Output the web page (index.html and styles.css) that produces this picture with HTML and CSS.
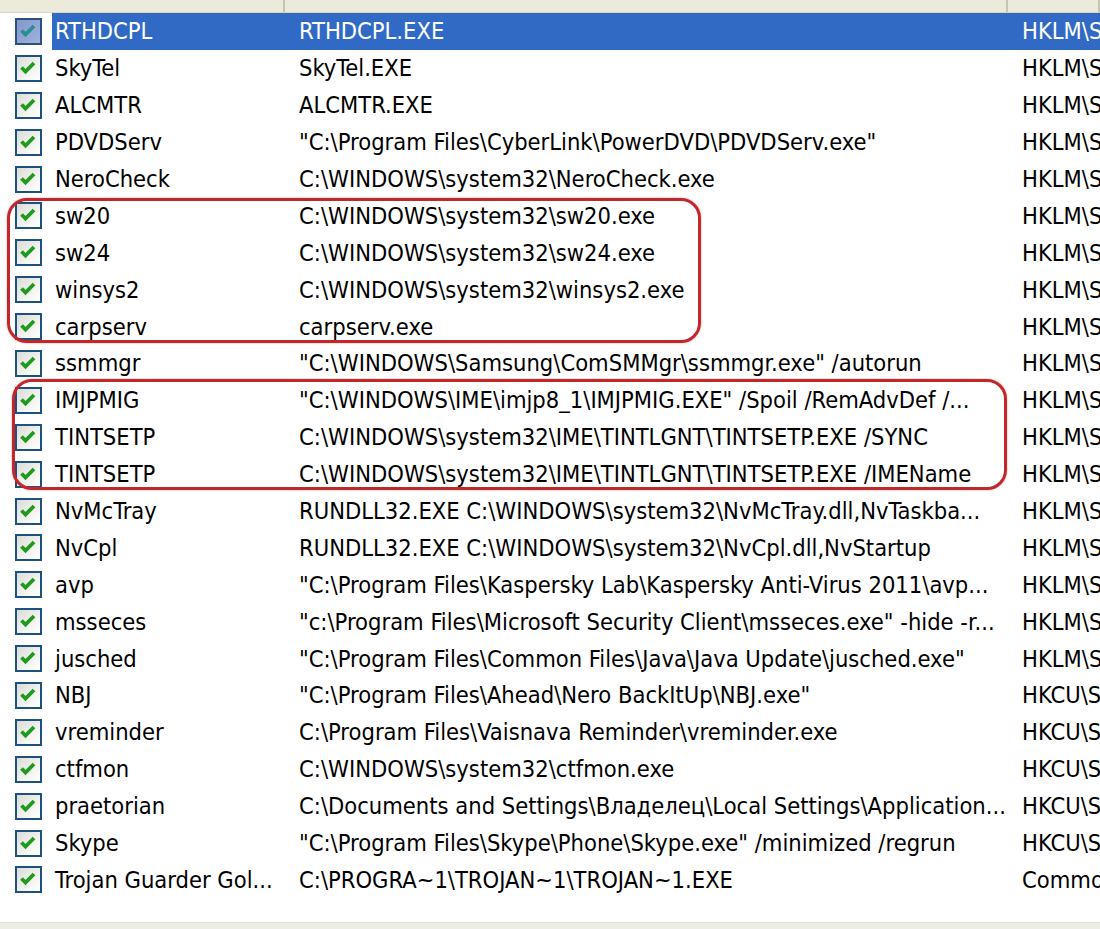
FILE: index.html
```html
<!DOCTYPE html>
<html lang="ru">
<head>
    <meta charset="UTF-8">
    <title>Автозагрузка</title>
    <link rel="stylesheet" href="styles.css">
</head>
<body>
    <div class="startup-list">
        <!-- Column headers (scrolled, only the bottom is visible) -->
        <div class="list-head">
            <div class="head-cell col-name"><span>Элемент автозагрузки</span></div>
            <div class="head-cell col-cmd"><span>Команда</span></div>
            <div class="head-cell col-loc"><span>Расположение</span></div>
        </div>

        <div class="list-body" id="rows"></div>

        <!-- Marked groups -->
        <div class="mark mark-first"></div>
        <div class="mark mark-second"></div>
    </div>
    <div class="scroll-edge"></div>

    <script src="app.js"></script>
</body>
</html>
```

FILE: styles.css
```css
:root {
    --select-color: #316ac5;
    --head-color: #ebeadb;
    --line-color: #c7c5b2;
    --mark-color: #c3262b;
    --row-height: 36.9px;
}

html, body {
    margin: 0;
    padding: 0;
    height: 100%;
}

body {
    display: flex;
    flex-direction: column;
    width: 1100px;
    height: 929px;
    overflow: hidden;
    background: #fff;
    color: #000;
    font-family: "DejaVu Sans Condensed", "DejaVu Sans", sans-serif;
    font-size: 23.5px;
}

.startup-list {
    position: relative;
    flex: 1;
    overflow: hidden;
}

/* Header */
.list-head {
    display: grid;
    grid-template-columns: 285px 723px 1fr;
    height: 13px;
    background: var(--head-color);
    border-bottom: 1px solid #d6d3bf;
    box-sizing: border-box;
}

.head-cell {
    overflow: hidden;
    white-space: nowrap;
    border-right: 2px solid var(--line-color);
    color: #000;
}

.head-cell span {
    display: block;
    line-height: 24px;
    margin-top: -25px;
}

.col-name span { padding-left: 12px; }
.col-cmd span { padding-left: 14px; }
.col-loc span { padding-left: 14px; }

/* Rows */
.row {
    display: grid;
    grid-template-columns: 285px 723px 1fr;
    height: var(--row-height);
    align-items: stretch;
}

.cell {
    display: flex;
    align-items: center;
    overflow: hidden;
    white-space: nowrap;
}

.cell-name {
    padding-left: 15px;
    gap: 10px;
}

.cell-name .label {
    display: flex;
    align-items: center;
    align-self: stretch;
    flex: 1;
    padding-left: 3px;
    overflow: hidden;
}

.cell-cmd,
.cell-loc {
    padding-left: 14px;
}

.row.selected .label,
.row.selected .cell-cmd,
.row.selected .cell-loc {
    background: var(--select-color);
    color: #fff;
}

/* XP style checkbox */
.check {
    flex: none;
    width: 27px;
    height: 27px;
    box-sizing: border-box;
    border: 2.5px solid #1c5180;
    background: linear-gradient(135deg, #dcdcd7, #f6f6f3 70%, #fff);
}

.check svg {
    display: block;
    width: 22px;
    height: 22px;
}

.check path {
    fill: none;
    stroke: #1f9a1f;
    stroke-width: 3.8;
}

.row.selected .check {
    border-color: #2b4e86;
    background: linear-gradient(135deg, #8197c9, #9fb3dd);
}

.row.selected .check path {
    stroke: #2a8f93;
}

/* Red marks around suspicious entries */
.mark {
    position: absolute;
    border: 3px solid var(--mark-color);
    border-radius: 20px;
    box-shadow: 0 0 2px rgba(195, 38, 43, 0.5);
}

.mark-first {
    left: 7px;
    top: 198px;
    width: 688px;
    height: 139px;
}

.mark-second {
    left: 12px;
    top: 379px;
    width: 989px;
    height: 105px;
}

.scroll-edge {
    height: 6px;
    background: #eeede5;
    border-top: 1px solid #e2e0d4;
}
```

FILE: app.js
```js
const HKLM = 'HKLM\\SOFTWARE\\Microsoft\\Windows\\CurrentVersion\\Run';
const HKCU = 'HKCU\\SOFTWARE\\Microsoft\\Windows\\CurrentVersion\\Run';

const startupItems = [
    ['RTHDCPL', 'RTHDCPL.EXE', HKLM],
    ['SkyTel', 'SkyTel.EXE', HKLM],
    ['ALCMTR', 'ALCMTR.EXE', HKLM],
    ['PDVDServ', '"C:\\Program Files\\CyberLink\\PowerDVD\\PDVDServ.exe"', HKLM],
    ['NeroCheck', 'C:\\WINDOWS\\system32\\NeroCheck.exe', HKLM],
    ['sw20', 'C:\\WINDOWS\\system32\\sw20.exe', HKLM],
    ['sw24', 'C:\\WINDOWS\\system32\\sw24.exe', HKLM],
    ['winsys2', 'C:\\WINDOWS\\system32\\winsys2.exe', HKLM],
    ['carpserv', 'carpserv.exe', HKLM],
    ['ssmmgr', '"C:\\WINDOWS\\Samsung\\ComSMMgr\\ssmmgr.exe" /autorun', HKLM],
    ['IMJPMIG', '"C:\\WINDOWS\\IME\\imjp8_1\\IMJPMIG.EXE" /Spoil /RemAdvDef /...', HKLM],
    ['TINTSETP', 'C:\\WINDOWS\\system32\\IME\\TINTLGNT\\TINTSETP.EXE /SYNC', HKLM],
    ['TINTSETP', 'C:\\WINDOWS\\system32\\IME\\TINTLGNT\\TINTSETP.EXE /IMEName', HKLM],
    ['NvMcTray', 'RUNDLL32.EXE C:\\WINDOWS\\system32\\NvMcTray.dll,NvTaskba...', HKLM],
    ['NvCpl', 'RUNDLL32.EXE C:\\WINDOWS\\system32\\NvCpl.dll,NvStartup', HKLM],
    ['avp', '"C:\\Program Files\\Kaspersky Lab\\Kaspersky Anti-Virus 2011\\avp...', HKLM],
    ['msseces', '"c:\\Program Files\\Microsoft Security Client\\msseces.exe" -hide -r...', HKLM],
    ['jusched', '"C:\\Program Files\\Common Files\\Java\\Java Update\\jusched.exe"', HKLM],
    ['NBJ', '"C:\\Program Files\\Ahead\\Nero BackItUp\\NBJ.exe"', HKCU],
    ['vreminder', 'C:\\Program Files\\Vaisnava Reminder\\vreminder.exe', HKCU],
    ['ctfmon', 'C:\\WINDOWS\\system32\\ctfmon.exe', HKCU],
    ['praetorian', 'C:\\Documents and Settings\\Владелец\\Local Settings\\Application...', HKCU],
    ['Skype', '"C:\\Program Files\\Skype\\Phone\\Skype.exe" /minimized /regrun', HKCU],
    ['Trojan Guarder Gol...', 'C:\\PROGRA~1\\TROJAN~1\\TROJAN~1.EXE', 'Common Startup']
];

const checkIcon = '<svg viewBox="0 0 22 22"><path d="M4.5 10.5 L8.5 14.5 L17 6"/></svg>';

function renderRows() {
    const container = document.getElementById('rows');
    startupItems.forEach(([name, command, location], index) => {
        const row = document.createElement('div');
        row.className = 'row' + (index === 0 ? ' selected' : '');
        row.innerHTML = `
            <div class="cell cell-name">
                <span class="check">${checkIcon}</span>
                <span class="label"></span>
            </div>
            <div class="cell cell-cmd"></div>
            <div class="cell cell-loc"></div>
        `;
        row.querySelector('.label').textContent = name;
        row.querySelector('.cell-cmd').textContent = command;
        row.querySelector('.cell-loc').textContent = location;
        container.appendChild(row);
    });
}

renderRows();
```
